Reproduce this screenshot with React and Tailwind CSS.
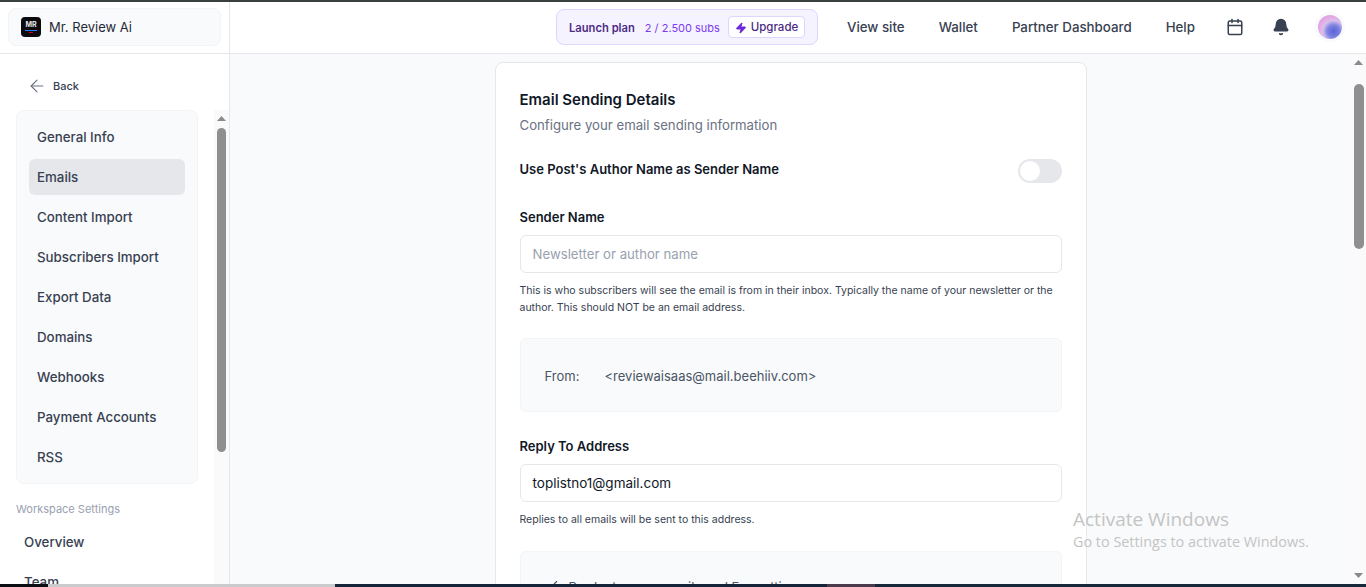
import { ArrowLeft, Bell, Calendar, Check, Zap } from "lucide-react";

const settingsLinks = [
  "General Info",
  "Emails",
  "Content Import",
  "Subscribers Import",
  "Export Data",
  "Domains",
  "Webhooks",
  "Payment Accounts",
  "RSS",
];

function ScrollArrow({ down }) {
  return (
    <svg width="9" height="5" viewBox="0 0 9 5" className="fill-[#8a8a8a]">
      <path d={down ? "M0 0h9L4.5 5z" : "M4.5 0L9 5H0z"} />
    </svg>
  );
}

function Header() {
  return (
    <header className="flex h-[52px] shrink-0 border-b border-gray-200 bg-white">
      <div className="flex w-[230px] shrink-0 items-center border-r border-gray-200 px-2 pb-px">
        <div className="flex h-[38px] w-[213px] items-center gap-2 rounded-lg border border-gray-100 bg-[#f9fafb] pl-3">
          <div className="flex h-5 w-5 flex-col items-center justify-center rounded bg-[#0b0b0f]">
            <span className="text-[7px] font-bold leading-[8px] text-gray-200">MR</span>
            <span className="mt-px h-px w-3 bg-blue-500" />
            <span className="mt-px h-px w-1 bg-red-600" />
          </div>
          <span className="pt-[2px] text-[13px] text-[#1f2937]">Mr. Review Ai</span>
        </div>
      </div>
      <div className="flex flex-1 items-center pb-px pl-[326px]">
        <div className="flex h-9 w-[262px] items-center whitespace-nowrap rounded-lg border border-[#ddd6fe] bg-[#f5f3ff] pl-3">
          <span className="pt-[3px] text-[11.2px] font-semibold text-[#4c2a85]">Launch plan</span>
          <span className="ml-[10px] pt-[3px] text-[11px] text-[#7c3aed]">2 / 2.500 subs</span>
          <button className="ml-auto mr-3 flex h-[22px] w-[77px] items-center justify-center gap-1 rounded border border-[#ddd6fe] bg-white pt-px text-[11.5px] font-medium text-[#4c2a85]">
            <Zap size={12} className="fill-[#6d28d9] text-[#6d28d9]" />
            Upgrade
          </button>
        </div>
        <nav className="ml-[29px] flex items-center gap-[34px] whitespace-nowrap pt-[2px] text-[13.3px] font-medium text-[#374151]">
          <span>View site</span>
          <span>Wallet</span>
          <span>Partner Dashboard</span>
          <span>Help</span>
        </nav>
        <Calendar size={18} className="ml-[31px] text-[#374151]" />
        <Bell size={18} className="ml-[28px] fill-[#374151] text-[#374151]" />
        <div className="ml-[25px] rounded-full bg-gray-50 p-[3px]">
          <div className="h-6 w-6 rounded-full bg-[radial-gradient(circle_at_65%_68%,#5a62d8_0%,#7d84e0_28%,#d9c0ec_48%,#e5a3e3_70%)]" />
        </div>
      </div>
    </header>
  );
}

function Sidebar() {
  return (
    <aside className="flex w-[230px] shrink-0 flex-col border-r border-gray-200 bg-white">
      <div className="flex h-[56px] shrink-0 items-center gap-[6px] pl-[27px] pt-2 text-[11px] font-medium text-[#374151]">
        <ArrowLeft size={20} className="text-gray-500" strokeWidth={1.4} />
        Back
      </div>
      <div className="flex min-h-0 flex-1">
        <div className="w-[214px] shrink-0 overflow-hidden pl-4">
          <div className="flex w-[182px] flex-col gap-1 rounded-lg border border-gray-100 bg-[#f9fafb] px-3 py-2">
            {settingsLinks.map((link) => (
              <div
                key={link}
                className={`flex h-9 items-center rounded-md px-2 pt-[2px] text-[13.3px] font-medium text-[#374151] ${
                  link === "Emails" ? "bg-[#e5e7eb] text-[#1f2937]" : ""
                }`}
              >
                {link}
              </div>
            ))}
          </div>
          <p className="mt-[17px] text-[11px] leading-4 text-gray-400">Workspace Settings</p>
          <div className="mt-[6px] flex flex-col pl-2 text-[13.3px] font-medium text-[#374151]">
            <div className="flex h-10 items-center">Overview</div>
            <div className="flex h-10 items-center">Team</div>
          </div>
        </div>
        <div className="flex w-[15px] flex-col items-center bg-[#fafafa] pt-[6px]">
          <ScrollArrow />
          <div className="mt-[7px] h-[324px] w-[9px] rounded-full bg-[#8f8f8f]" />
        </div>
      </div>
    </aside>
  );
}

function Content() {
  return (
    <main className="min-w-0 flex-1 overflow-hidden bg-[#f9fafb] pt-2">
      <div className="mx-auto h-[700px] w-[592px] rounded-t-lg border border-gray-200 bg-white px-6 pt-[25px]">
        <h2 className="text-[15px] font-semibold leading-6 text-[#111827]">Email Sending Details</h2>
        <p className="mt-[3px] text-[13.2px] leading-5 text-gray-500">Configure your email sending information</p>
        <div className="mt-[24px] flex h-6 items-start justify-between">
          <span className="text-[13px] font-semibold leading-5 text-[#111827]">Use Post's Author Name as Sender Name</span>
          <div className="flex h-6 w-11 items-center rounded-full bg-[#e5e7eb] p-px">
            <div className="h-[22px] w-[22px] rounded-full border border-gray-200 bg-white" />
          </div>
        </div>
        <label className="mt-[24px] block text-[13px] font-semibold leading-5 text-[#111827]">Sender Name</label>
        <div className="mt-2 flex h-[38px] items-center rounded-md border border-gray-200 px-3 pt-[2px] text-[13.2px] text-gray-400">
          Newsletter or author name
        </div>
        <p className="mt-[9px] text-[10.5px] leading-[17px] text-[#374151]">
          This is who subscribers will see the email is from in their inbox. Typically the name of your newsletter or the
          <br />
          author. This should NOT be an email address.
        </p>
        <div className="mt-[22px] flex h-[74px] items-center rounded-md border border-gray-100 bg-[#f9fafb] px-6 pt-[3px] text-[13px] text-gray-600">
          <span className="w-[60px]">From:</span>
          <span>&lt;reviewaisaas@mail.beehiiv.com&gt;</span>
        </div>
        <label className="mt-[24px] block text-[13px] font-semibold leading-5 text-[#111827]">Reply To Address</label>
        <div className="mt-2 flex h-[38px] items-center rounded-md border border-gray-200 px-3 text-[13.5px] text-[#111827]">
          toplistno1@gmail.com
        </div>
        <p className="mt-[9px] text-[10.5px] leading-[17px] text-[#374151]">Replies to all emails will be sent to this address.</p>
        <div className="mt-[23px] flex h-[100px] items-start gap-[10px] rounded-md border border-gray-100 bg-[#f9fafb] pl-6 pt-[26px] text-[13px] text-gray-600">
          <Check size={14} />
          Products, your emails and Formatting
        </div>
      </div>
    </main>
  );
}

export default function App() {
  return (
    <div className="relative flex h-[587px] flex-col overflow-hidden bg-white font-['Inter',sans-serif]">
      <div className="h-[2px] shrink-0 bg-[#3a3f3f]" />
      <Header />
      <div className="flex min-h-0 flex-1">
        <Sidebar />
        <Content />
        <div className="flex w-[15px] shrink-0 flex-col items-center bg-[#fafafa] pt-[6px]">
          <ScrollArrow />
          <div className="mt-[19px] h-[165px] w-[10px] rounded-full bg-[#8f8f8f]" />
          <div className="mt-auto pb-[6px]">
            <ScrollArrow down />
          </div>
        </div>
      </div>
      <div className="flex h-[3px] shrink-0">
        <div className="w-[48px] bg-[#0b0f14]" />
        <div className="w-[287px] bg-[#c9cbcc]" />
        <div className="w-[492px] bg-[#16243a]" />
        <div className="w-[48px] bg-[#4b3a4c]" />
        <div className="flex-1 bg-[#16283a]" />
      </div>
      <div className="pointer-events-none absolute left-[1073px] top-[507px] font-['Open_Sans',sans-serif] text-[#c4c4c4]">
        <p className="text-[19px] leading-6">Activate Windows</p>
        <p className="mt-px text-[14.4px] leading-5">Go to Settings to activate Windows.</p>
      </div>
    </div>
  );
}
